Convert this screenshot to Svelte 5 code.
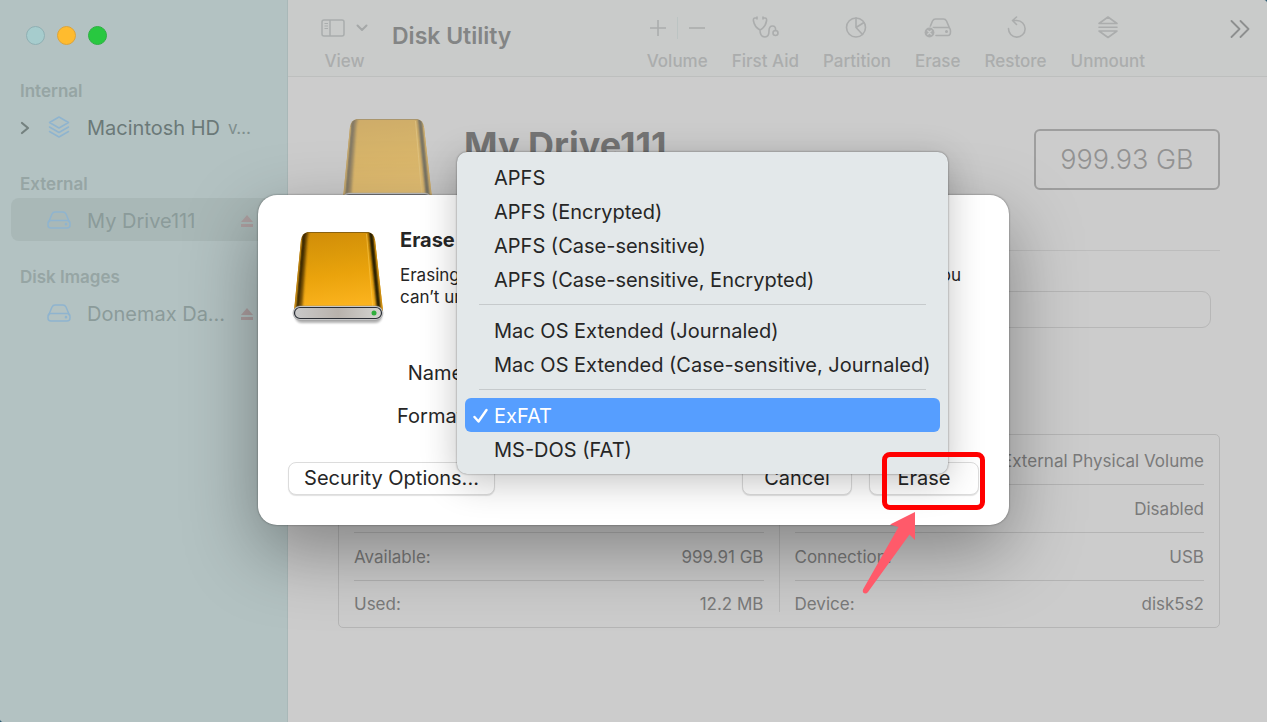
<script>
  const sections = [
    { title: 'Internal', name: 'Macintosh HD', icon: 'layers', note: 'v…', strong: true },
    { title: 'External', name: 'My Drive111', icon: 'disk', eject: true, selected: true },
    { title: 'Disk Images', name: 'Donemax Da…', icon: 'disk', eject: true }
  ];

  const tools = ['First Aid', 'Partition', 'Erase', 'Restore', 'Unmount'];

  const leftFacts = [
    ['Mount Point:', '/Volumes/My Drive111'],
    ['Capacity:', '999.93 GB'],
    ['Available:', '999.91 GB'],
    ['Used:', '12.2 MB']
  ];
  const rightFacts = [
    ['Type:', 'USB External Physical Volume'],
    ['Owners:', 'Disabled'],
    ['Connection:', 'USB'],
    ['Device:', 'disk5s2']
  ];

  const groups = [
    ['APFS', 'APFS (Encrypted)', 'APFS (Case-sensitive)', 'APFS (Case-sensitive, Encrypted)'],
    ['Mac OS Extended (Journaled)', 'Mac OS Extended (Case-sensitive, Journaled)'],
    ['ExFAT', 'MS-DOS (FAT)']
  ];
  let format = $state('ExFAT');
  let name = $state('My Drive111');
</script>

{#snippet drive()}
  <svg class="drive" viewBox="0 0 92 94" width="92" height="94" aria-hidden="true">
    <defs>
      <linearGradient id="gold" x1="0" y1="0" x2="0.15" y2="1">
        <stop offset="0" stop-color="#d08c08" />
        <stop offset="0.35" stop-color="#dd9a0a" />
        <stop offset="0.6" stop-color="#eaa30c" />
        <stop offset="1" stop-color="#fbb31e" />
      </linearGradient>
      <linearGradient id="front" x1="0" y1="0" x2="1" y2="0">
        <stop offset="0" stop-color="#c9c9c9" />
        <stop offset="0.5" stop-color="#b8b2ac" />
        <stop offset="1" stop-color="#d5d5d2" />
      </linearGradient>
      <filter id="soft" x="-0.5" y="-0.1" width="2" height="1.2"><feGaussianBlur stdDeviation="1" /></filter>
      <clipPath id="shell"><path d="M16 1H76Q82 2 83 9L91 80H2L9 9Q10 2 16 1Z" /></clipPath>
    </defs>
    <rect x="3" y="79" width="87" height="13" rx="6.500" fill="#000" opacity="0.3" filter="url(#soft)" />
    <path d="M16 1H76Q82 2 83 9L91 80H2L9 9Q10 2 16 1Z" fill="url(#gold)" />
    <g fill="none" clip-path="url(#shell)">
      <g filter="url(#soft)">
        <path d="M15 0Q13 6 13 12L8 80" stroke="#4d3302" stroke-width="4" opacity="0.75" />
        <path d="M12.500 0Q11 6 11 12L5 80" stroke="#1e1402" stroke-width="2.500" />
        <path d="M78.500 0Q79.500 6 80 12L87 80" stroke="#1e1402" stroke-width="4" />
      </g>
      <path d="M9 9L2.500 80" stroke="#b98115" stroke-width="2" />
      <path d="M83 9L91 80" stroke="#c98c14" stroke-width="2" />
      <path d="M74.500 3L81 80" stroke="#ffd25a" opacity="0.5" />
      <path d="M15 1.500H77" stroke="#8a6211" />
    </g>
    <rect x="1" y="75" width="90" height="14" rx="7" fill="#d9dadb" stroke="#8e8e8e" stroke-width="0.500" />
    <rect x="2.500" y="76.500" width="87" height="11" rx="5.500" fill="url(#front)" stroke="#2b2f36" stroke-width="1.200" />
    <circle cx="82" cy="82" r="2.500" fill="#2fae3c" />
  </svg>
{/snippet}

{#snippet facts(rows)}
  <table>
    <tbody>
      {#each rows as [label, value]}
        <tr><th scope="row">{label}</th><td>{value}</td></tr>
      {/each}
    </tbody>
  </table>
{/snippet}

<div class="window">
  <aside>
    <div class="lights">
      <button class="close" aria-label="Close"></button>
      <button class="minimize" aria-label="Minimize"></button>
      <button class="zoom" aria-label="Zoom"></button>
    </div>
    {#each sections as s}
      <h2>{s.title}</h2>
      <button class="row" class:selected={s.selected} class:strong={s.strong}>
        <span class="twist">
          {#if s.strong}
            <svg width="10" height="14" viewBox="0 0 10 14"><path d="M2 2l6 5-6 5" fill="none" stroke="#74817f" stroke-width="2.200" stroke-linecap="round" stroke-linejoin="round" /></svg>
          {/if}
        </span>
        {#if s.icon === 'layers'}
          <svg class="ico" width="24" height="24" viewBox="0 0 24 24" fill="none" stroke="#8fb4cf" stroke-width="1.500" stroke-linejoin="round" stroke-linecap="round">
            <path d="M12 1l9.500 5.500L12 12 2.500 6.500zM2.500 11l9.500 5.500 9.500-5.500M2.500 15.500L12 21l9.500-5.500" />
          </svg>
        {:else}
          <svg class="ico" width="24" height="24" viewBox="0 0 24 24" fill="none" stroke="#8fb4cf" stroke-width="1.500" stroke-linejoin="round">
            <path d="M1.500 13.500L5 5Q6 3 8 3h8q2 0 3 2l3.500 8.500" />
            <rect x="1" y="11.500" width="22" height="7.500" rx="3" />
            <circle cx="19" cy="15.200" r="0.600" fill="#8fb4cf" />
          </svg>
        {/if}
        <span>{s.name}</span>
        {#if s.note}<span class="note">{s.note}</span>{/if}
        {#if s.eject}
          <svg class="eject" width="14" height="14" viewBox="0 0 14 14" fill="#ad9fa0"><path d="M7 1l6 7H1zM1 10h12v3H1z" /></svg>
        {/if}
      </button>
    {/each}
  </aside>

  <main>
    <header>
      <button class="tool">
        <span class="glyph">
          <svg width="24" height="20" viewBox="0 0 24 20" fill="none" stroke="#a9adad" stroke-width="1.500"><rect x="1" y="2" width="22" height="16" rx="2" /><path d="M9 2v16" /><path d="M3.500 5.500H7M3.500 8H7M3.500 10.500H7" stroke-width="1" /></svg>
          <svg width="12" height="8" viewBox="0 0 12 8" fill="none" stroke="#a5a8a8" stroke-width="2" stroke-linecap="round" stroke-linejoin="round"><path d="M1.500 1.500L6 6l4.500-4.500" /></svg>
        </span>
        <span>View</span>
      </button>
      <h1>Disk Utility</h1>
      <div class="tools">
        <div class="tool" role="group" aria-label="Volume">
          <span class="glyph pair">
            <button aria-label="Add volume"><svg width="18" height="18" viewBox="0 0 18 18" stroke="#abadad" stroke-width="1.600"><path d="M9 1v16M1 9h16" /></svg></button>
            <i></i>
            <button aria-label="Delete volume"><svg width="18" height="18" viewBox="0 0 18 18" stroke="#abadad" stroke-width="1.600"><path d="M1 9h16" /></svg></button>
          </span>
          <span>Volume</span>
        </div>
        {#each tools as t}
          <button class="tool">
            <span class="glyph">
              <svg width="28" height="26" viewBox="0 0 28 26" fill="none" stroke="#abadad" stroke-width="1.600" stroke-linecap="round" stroke-linejoin="round">
                {#if t === 'First Aid'}
                  <path d="M6 3H4Q2 3 2.500 6Q3.500 12 9 15Q14.500 12 15.500 6Q16 3 14 3H12M6 2v2M12 2v2M9 15Q9 22 14 22Q18 22 18 16Q18 11 21.500 11Q25 11 24.500 15.500" />
                  <circle cx="24.500" cy="18" r="2.500" />
                {:else if t === 'Partition'}
                  <circle cx="13" cy="12.500" r="9.500" />
                  <path d="M13 3v9.500l8-5M13 12.500l6.500 7" />
                {:else if t === 'Erase'}
                  <path d="M6 12l2.500-6Q9.500 4 11.500 4h8q2 0 3 2l3 7M9 12.500h15q2.500 0 2.500 4t-2.500 4H12" />
                  <circle cx="22.500" cy="16.500" r="0.700" />
                  <circle cx="5.500" cy="17.500" r="6" fill="#c9cbca" stroke="none" />
                  <circle cx="5.500" cy="17.500" r="4.900" fill="#abadad" stroke="none" />
                  <path d="M3.800 15.800l3.400 3.400M7.200 15.800l-3.400 3.400" stroke="#c9cbca" stroke-width="1.300" />
                {:else if t === 'Restore'}
                  <path d="M6.500 13.500a8.300 8.300 0 1 0 8.300-8h-4M14.500 2l-4 3.500 4 4" />
                {:else}
                  <path d="M5 8.500L14 2l9 6.500zM5 12.200h18M5 16h18L14 22.500z" />
                {/if}
              </svg>
            </span>
            <span>{t}</span>
          </button>
        {/each}
      </div>
      <button class="more" aria-label="More">
        <svg width="20" height="18" viewBox="0 0 20 18" fill="none" stroke="#8d8f8f" stroke-width="1.800" stroke-linecap="round" stroke-linejoin="round"><path d="M1.500 1l8 8-8 8M10.500 1l8 8-8 8" /></svg>
      </button>
    </header>

    <div class="content">
      <div class="summary">
        <span class="dim">{@render drive()}</span>
        <h3>My Drive111</h3>
        <div class="size">999.93 GB</div>
      </div>
      <hr />
      <div class="usage"></div>
      <div class="facts">
        {@render facts(leftFacts)}
        <i></i>
        {@render facts(rightFacts)}
      </div>
    </div>
  </main>

  <div class="sheet">
    <div class="dialog" role="dialog" aria-labelledby="erase-title">
      <div class="intro">
        {@render drive()}
        <div class="copy">
          <h4 id="erase-title">Erase “My Drive111”?</h4>
          <p>Erasing “My Drive111” will remove all of your data stored on it, and you<br />can’t undo this action.</p>
        </div>
      </div>
      <div class="fields">
        <label for="vol-name">Name:</label>
        <input id="vol-name" bind:value={name} />
        <label for="vol-format">Format:</label>
        <select id="vol-format" bind:value={format}>
          {#each groups.flat() as g}<option>{g}</option>{/each}
        </select>
      </div>
      <div class="actions">
        <button class="security">Security Options...</button>
        <button>Cancel</button>
        <button>Erase</button>
      </div>

      <div class="menu" role="menu">
        {#each groups as group, i}
          {#if i}<hr />{/if}
          {#each group as item}
            <button role="menuitemradio" aria-checked={format === item} class:on={format === item} onclick={() => (format = item)}>
              <span class="tick">
                {#if format === item}
                  <svg width="16" height="16" viewBox="0 0 16 16" fill="none" stroke="#fff" stroke-width="2.400" stroke-linecap="round" stroke-linejoin="round"><path d="M2.500 9L6.500 13.500 14.500 2" /></svg>
                {/if}
              </span>
              {item}
            </button>
          {/each}
        {/each}
      </div>

      <div class="ring"></div>
      <svg class="arrow" width="54" height="82" viewBox="0 0 54 82" aria-hidden="true">
        <path d="M53 0L28 12.500 36.500 15 1 77.500Q0 81 3 81.500 5 81.500 6 80L47.500 22.500 53 28Z" fill="#ff5a6a" />
      </svg>
    </div>
  </div>
</div>

<style>
  :global(body) { background: #2f5f75; }
  .window {
    position: relative;
    display: flex;
    min-height: 100vh;
    overflow: hidden;
    border-radius: 0 4px 0 4px;
    background: #ccc;
    font-family: Inter, "Liberation Sans", sans-serif;
    font-size: 17px;
  }
  button { font: inherit; color: inherit; background: none; border: 0; padding: 0; margin: 0; }
  h1, h2, h3, h4, p { margin: 0; }
  svg { display: block; flex: none; }

  aside {
    box-sizing: border-box;
    flex: none;
    width: 288px;
    padding: 26px 10px 0 11px;
    background: #b3c2c2;
    border-right: 1px solid #a9b8b8;
    color: #8b9b9a;
  }
  .lights { display: flex; gap: 12px; padding-left: 15px; }
  .lights button { width: 19px; height: 19px; border-radius: 50%; border: 1px solid #8fb0b3; box-sizing: border-box; }
  .lights .close { background: #a6cccd; }
  .lights .minimize { background: #ffbb2e; border-color: #dda43a; }
  .lights .zoom { background: #28c840; border-color: #2eb043; }
  h2 { padding: 25px 9px 3px; font-size: 17px; line-height: 22px; font-weight: 600; color: #96a5a4; }
  .lights + h2 { padding-top: 35px; }
  .row { display: flex; align-items: center; width: 100%; height: 43px; padding-top: 2px; border-radius: 8px; font-size: 20px; text-align: left; }
  .row.selected { background: #a9b8b7; }
  .strong { color: #6b7978; }
  .twist { width: 36px; box-sizing: border-box; padding-left: 9px; flex: none; }
  .ico { margin-right: 16px; }
  .note { margin-left: 8px; font-size: 17px; color: #7f8e8d; }
  .eject { margin-left: auto; margin-right: 23px; }

  main { flex: 1; min-width: 0; }
  header {
    display: flex;
    box-sizing: border-box;
    height: 77px;
    padding: 14px 17px 0 33px;
    background: #c9cbca;
    border-bottom: 1px solid #bdbfbe;
    color: #abadad;
  }
  .tool { display: flex; flex-direction: column; align-items: center; height: max-content; line-height: 22px; font-weight: 500; }
  .glyph { display: flex; align-items: center; justify-content: center; gap: 11px; height: 28px; margin-bottom: 8px; }
  .pair { gap: 10px; }
  .pair i { width: 1px; height: 22px; background: #bcc4c3; }
  h1 { margin-left: 24px; font-size: 23px; line-height: 44px; font-weight: 600; color: #838585; }
  .tools { display: flex; gap: 24px; margin-left: auto; }
  .more { align-self: start; margin-top: 6px; margin-left: 85px; }

  .content { padding: 41px 47px 40px 50px; color: #7a7a7a; }
  .summary { display: flex; align-items: flex-start; height: 132px; }
  .dim { margin: 0 31px 0 3px; opacity: 0.5; }
  h3 { margin-top: 6px; font-size: 36px; line-height: 42px; font-weight: 700; color: #757575; }
  .size {
    box-sizing: border-box;
    width: 186px;
    height: 61px;
    margin: 11px 0 0 auto;
    border: 2px solid #9e9e9e;
    border-radius: 6px;
    font-size: 27px;
    font-weight: 300;
    line-height: 58px;
    text-align: center;
    color: #929292;
  }
  .content > hr { margin: 0; border: 0; height: 1px; background: #bdbdbd; }
  .usage { height: 35px; margin: 40px 9px 106px; border: 1px solid #b7b7b7; border-radius: 9px; }
  .facts { display: grid; grid-template-columns: 1fr 1px 1fr; column-gap: 15px; padding: 2px 15px 0; border: 1px solid #b5b5b5; border-radius: 5px; }
  .facts i { margin: 15px 0; background: #b9b9b9; }
  table { width: 100%; border-collapse: collapse; }
  th, td { padding: 0; height: 47px; border-bottom: 1px solid #b4b4b4; font-weight: 400; text-align: left; white-space: nowrap; }
  td { text-align: right; }
  tr:last-child > * { height: 46px; border-bottom: 0; }

  .sheet { position: absolute; inset: 195px 0 auto; display: flex; justify-content: center; }
  .dialog {
    position: relative;
    box-sizing: border-box;
    width: 751px;
    padding: 33px 30px 30px;
    border-radius: 19px;
    background: #fff;
    box-shadow: 0 0 2px rgba(0, 0, 0, 0.5), 0 26px 72px rgba(0, 0, 0, 0.36);
    color: #262626;
  }
  .intro { display: flex; gap: 16px; padding-left: 4px; }
  .intro .drive { margin-top: 3px; }
  .copy { flex: 1; }
  h4 { font-size: 20px; line-height: 24px; font-weight: 700; }
  p { margin-top: 12px; font-size: 17px; line-height: 22px; white-space: nowrap; }
  .fields { display: grid; grid-template-columns: 181px 440px; align-items: center; gap: 11px 8px; margin-top: 32px; font-size: 20px; }
  .fields label { text-align: right; }
  .fields input, .fields select { box-sizing: border-box; height: 32px; padding: 0 8px; border: 1px solid #d8d8d8; border-radius: 6px; background: #fff; font: inherit; color: inherit; }
  .actions { display: flex; gap: 17px; margin-top: 30px; }
  .actions button {
    box-sizing: border-box;
    width: 110px;
    height: 33px;
    padding-bottom: 2px;
    border: 1px solid #dcdcdc;
    border-radius: 8px;
    background: #fff;
    box-shadow: 0 1px 1px rgba(0, 0, 0, 0.12);
    font-size: 20px;
  }
  .actions .security { width: 207px; margin-right: auto; }

  .menu {
    position: absolute;
    top: -43px;
    left: 199px;
    box-sizing: border-box;
    width: 491px;
    padding: 8px;
    border-radius: 10px;
    background: #e3e8ea;
    box-shadow: 0 0 2px rgba(0, 0, 0, 0.5), 0 8px 36px rgba(0, 0, 0, 0.24);
  }
  .menu button { display: flex; align-items: center; width: 100%; height: 34px; padding-top: 1px; border-radius: 6px; font-size: 20px; white-space: nowrap; }
  .menu .on { background: #569eff; color: #fff; }
  .tick { width: 22px; padding-left: 7px; flex: none; }
  .menu hr { margin: 8px 14px; border: 0; height: 1px; background: #c6cacc; }

  .ring { position: absolute; right: 24px; bottom: 15px; width: 93px; height: 48px; border: 5px solid #f00; border-radius: 8px; }
  .arrow { position: absolute; left: 604px; top: 317px; }
</style>
